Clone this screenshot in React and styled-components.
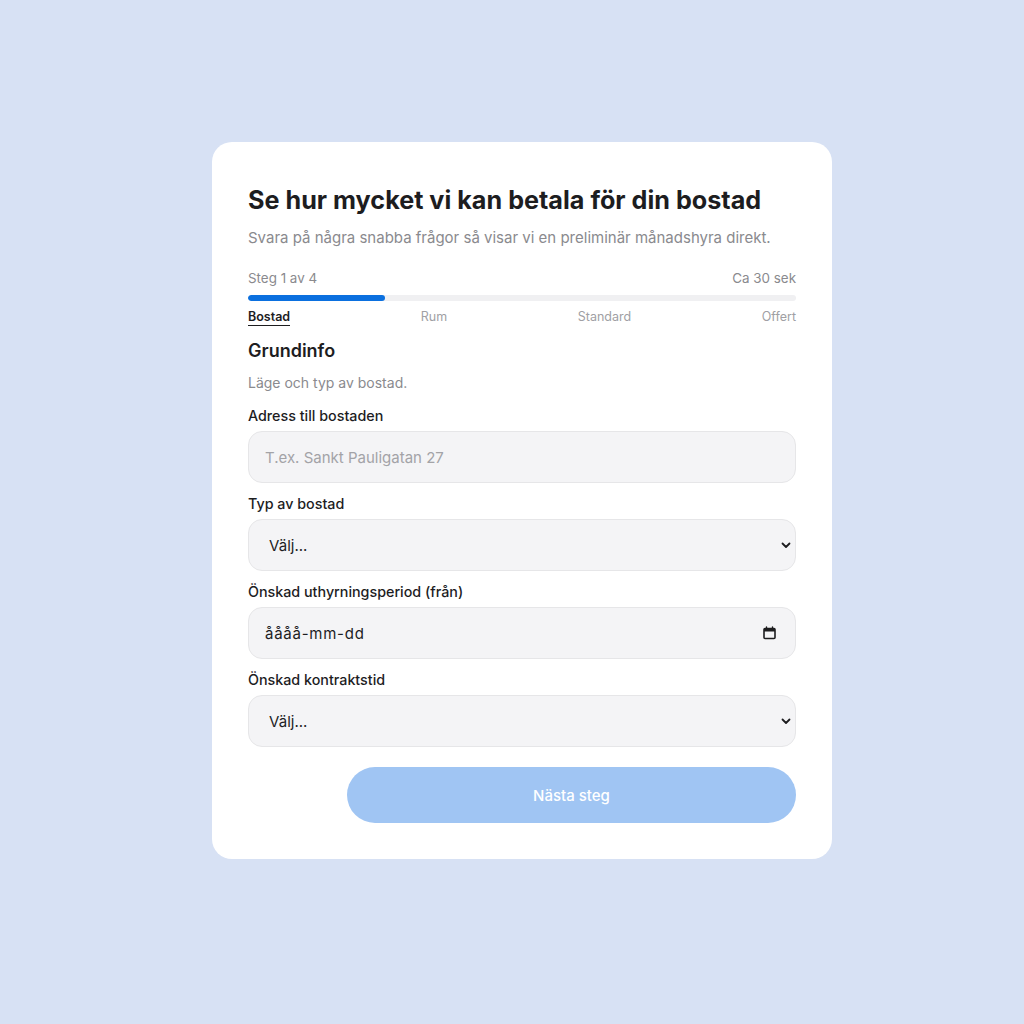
import React from "react";
import styled, { createGlobalStyle } from "styled-components";

const Global = createGlobalStyle`
  html, body { margin: 0; padding: 0; background: #d7e1f4; }
  body { font-family: Inter, "Noto Sans", "Liberation Sans", sans-serif; -webkit-font-smoothing: antialiased; }
  * { box-sizing: border-box; }
`;

const Page = styled.div`
  min-height: 1024px;
  display: flex;
  justify-content: center;
  align-items: flex-start;
  padding: 142px 0 0 20px;
`;

const Card = styled.div`
  width: 620px;
  background: #fff;
  border-radius: 20px;
  padding: 42px 36px 36px;
  display: flex;
  flex-direction: column;
`;

const Title = styled.h1`
  margin: 0;
  font-size: 25.2px;
  line-height: 32px;
  font-weight: 700;
  color: #1d1d1f;
  letter-spacing: 0;
`;

const Subtitle = styled.p`
  margin: 12px 0 0;
  font-size: 15px;
  line-height: 20px;
  color: #8a8a8e;
`;

const MetaRow = styled.div`
  margin-top: 22px;
  display: flex;
  justify-content: space-between;
  font-size: 13.4px;
  line-height: 16px;
  color: #8a8a8e;
`;

const Track = styled.div`
  margin-top: 9px;
  height: 6px;
  border-radius: 3px;
  background: #f0f0f2;
  overflow: hidden;
`;

const Fill = styled.div`
  height: 100%;
  border-radius: 3px;
  background: #0b70df;
`;

const Steps = styled.div`
  margin-top: 9px;
  display: flex;
  justify-content: space-between;
`;

const Step = styled.span`
  font-size: 12.5px;
  line-height: 14px;
  color: ${(p) => (p.$active ? "#1d1d1f" : "#a0a0a4")};
  font-weight: ${(p) => (p.$active ? 600 : 400)};
  border-bottom: 1px solid ${(p) => (p.$active ? "#1d1d1f" : "transparent")};
  padding-bottom: 1px;
`;

const SectionTitle = styled.h2`
  margin: 13px 0 0;
  font-size: 18px;
  line-height: 24px;
  font-weight: 600;
  color: #1d1d1f;
`;

const SectionHint = styled.p`
  margin: 11px 0 0;
  font-size: 14px;
  line-height: 18px;
  color: #8a8a8e;
`;

const Field = styled.div`
  margin-top: ${(p) => p.$mt || 12}px;
  display: flex;
  flex-direction: column;
  gap: 6px;
`;

const Label = styled.label`
  font-size: 14.3px;
  line-height: 18px;
  font-weight: 500;
  color: #1d1d1f;
`;

const Input = styled.input`
  height: 52px;
  width: 100%;
  border: 1px solid #e6e6e8;
  background: #f4f4f6;
  border-radius: 14px;
  padding: 0 16px;
  font-family: inherit;
  font-size: 15px;
  color: #1d1d1f;
  outline: none;
  &::placeholder { color: #a3a3a7; }
`;

const SelectWrap = styled.div`
  position: relative;
`;

const Select = styled.select`
  appearance: none;
  -webkit-appearance: none;
  height: 52px;
  width: 100%;
  border: 1px solid #e6e6e8;
  background: #f4f4f6;
  border-radius: 14px;
  padding: 0 40px 0 20px;
  font-family: inherit;
  font-size: 15px;
  color: #1d1d1f;
  outline: none;
`;

const Chevron = styled.svg`
  position: absolute;
  right: 4px;
  top: 50%;
  transform: translateY(-50%);
  pointer-events: none;
`;

const DateBox = styled.div`
  height: 52px;
  border: 1px solid #e6e6e8;
  background: #f4f4f6;
  border-radius: 14px;
  padding: 0 19px 0 16px;
  display: flex;
  align-items: center;
  justify-content: space-between;
`;

const DateText = styled.input`
  border: none;
  background: transparent;
  outline: none;
  font-family: inherit;
  font-size: 15px;
  letter-spacing: 0.05em;
  color: #1d1d1f;
  padding: 0;
  flex: 1;
  &::placeholder { color: #1d1d1f; }
`;

const Actions = styled.div`
  margin-top: 20px;
  display: flex;
  justify-content: flex-end;
`;

const Button = styled.button`
  width: 449px;
  height: 56px;
  border: none;
  border-radius: 28px;
  background: #a0c5f3;
  color: #fff;
  font-family: inherit;
  font-size: 15px;
  font-weight: 500;
`;

const ChevronIcon = () => (
  <Chevron width="12" height="12" viewBox="0 0 12 12" fill="none">
    <path d="M2.5 4.5 L6 8 L9.5 4.5" stroke="#1d1d1f" strokeWidth="1.8" strokeLinecap="round" strokeLinejoin="round" />
  </Chevron>
);

const CalendarIcon = () => (
  <svg width="13" height="14" viewBox="0 0 13 14" fill="none">
    <rect x="1" y="2.5" width="11" height="10" rx="1" stroke="#1d1d1f" strokeWidth="1.6" />
    <rect x="1" y="2.5" width="11" height="3" fill="#1d1d1f" />
    <path d="M3.5 1 V3 M9.5 1 V3" stroke="#1d1d1f" strokeWidth="1.4" strokeLinecap="round" />
  </svg>
);

export default function App() {
  const progress = 25;
  return (
    <>
      <Global />
      <Page>
        <Card>
          <Title>Se hur mycket vi kan betala för din bostad</Title>
          <Subtitle>Svara på några snabba frågor så visar vi en preliminär månadshyra direkt.</Subtitle>
          <MetaRow>
            <span>Steg 1 av 4</span>
            <span>Ca 30 sek</span>
          </MetaRow>
          <Track>
            <Fill style={{ width: `${progress}%` }} />
          </Track>
          <Steps>
            <Step $active>Bostad</Step>
            <Step>Rum</Step>
            <Step>Standard</Step>
            <Step>Offert</Step>
          </Steps>
          <SectionTitle>Grundinfo</SectionTitle>
          <SectionHint>Läge och typ av bostad.</SectionHint>
          <Field $mt={15}>
            <Label>Adress till bostaden</Label>
            <Input placeholder="T.ex. Sankt Pauligatan 27" />
          </Field>
          <Field>
            <Label>Typ av bostad</Label>
            <SelectWrap>
              <Select defaultValue="">
                <option value="">Välj...</option>
              </Select>
              <ChevronIcon />
            </SelectWrap>
          </Field>
          <Field>
            <Label>Önskad uthyrningsperiod (från)</Label>
            <DateBox>
              <DateText placeholder="åååå-mm-dd" />
              <CalendarIcon />
            </DateBox>
          </Field>
          <Field>
            <Label>Önskad kontraktstid</Label>
            <SelectWrap>
              <Select defaultValue="">
                <option value="">Välj...</option>
              </Select>
              <ChevronIcon />
            </SelectWrap>
          </Field>
          <Actions>
            <Button>Nästa steg</Button>
          </Actions>
        </Card>
      </Page>
    </>
  );
}
